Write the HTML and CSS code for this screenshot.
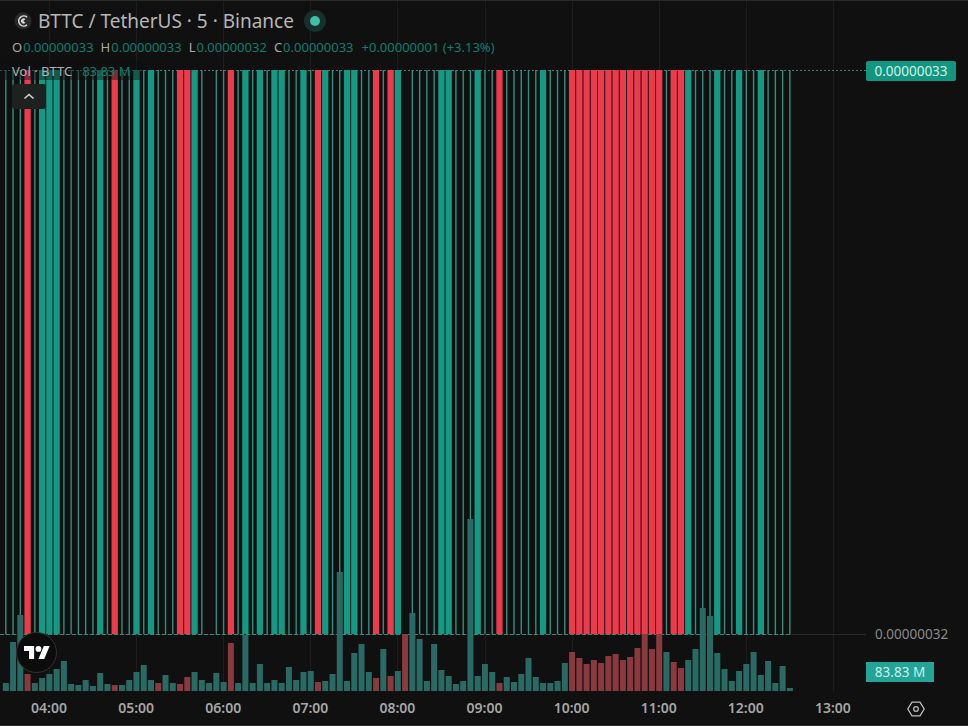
FILE: index.html
```html
<!DOCTYPE html>
<html lang="en">
<head>
<meta charset="utf-8">
<title>BTTC / TetherUS</title>
<link rel="stylesheet" href="styles.css">
</head>
<body>
<main class="chart">
  <section class="pane">
    <svg id="plot" class="plot" width="866" height="692" viewBox="0 0 866 692" aria-hidden="true"></svg>
    <div class="legend">
      <div class="title-row">
        <svg class="coin" width="18" height="18" viewBox="0 0 18 18" aria-hidden="true">
          <circle cx="9" cy="9" r="8.5" class="coin-bg"/>
          <path d="M13 5.2A5 5 0 1 0 13 12.8" class="coin-ring"/>
          <path d="M11.4 7.2A2.6 2.6 0 1 0 11.4 10.8L9.2 9Z" class="coin-core"/>
        </svg>
        <span class="title">BTTC / TetherUS · 5 · Binance</span>
        <span class="status"><span class="status-dot"></span></span>
      </div>
      <div class="ohlc-row">
        <span class="pair"><b>O</b><i>0.00000033</i></span>
        <span class="pair"><b>H</b><i>0.00000033</i></span>
        <span class="pair"><b>L</b><i>0.00000032</i></span>
        <span class="pair"><b>C</b><i>0.00000033</i></span>
        <span class="change">+0.00000001 (+3.13%)</span>
      </div>
      <div class="vol-row"><span class="vol-name">Vol · BTTC</span><span class="vol-value">83.83 M</span></div>
      <button class="collapse" type="button" aria-label="Collapse">
        <svg width="12" height="7" viewBox="0 0 12 7" aria-hidden="true"><path d="M1.5 5.5 6 1.5l4.500 4" class="chevron"/></svg>
      </button>
    </div>
    <div class="tv-logo">
      <svg width="26" height="13" viewBox="0 4 36 18" aria-hidden="true">
        <path d="M14 22H7V11H0V4h14v18zM28 22h-8l7.500-18h8L28 22z" class="logo-fill"/>
        <circle cx="20" cy="8" r="4" class="logo-fill"/>
      </svg>
    </div>
  </section>
  <aside class="price-axis">
    <span class="tag tag-price">0.00000033</span>
    <span class="axis-price">0.00000032</span>
    <span class="tag tag-vol">83.83 M</span>
  </aside>
  <footer class="time-axis">
    <span>04:00</span><span>05:00</span><span>06:00</span><span>07:00</span><span>08:00</span><span>09:00</span><span>10:00</span><span>11:00</span><span>12:00</span><span>13:00</span>
  </footer>
  <div class="corner">
    <svg width="20" height="20" viewBox="0 0 20 20" aria-hidden="true">
      <path d="M6 3.200h8L18.200 10 14 16.800H6L1.800 10Z" class="gear"/>
      <circle cx="10" cy="10" r="2.300" class="gear"/>
    </svg>
  </div>
</main>
<script src="app.js"></script>
</body>
</html>
```

FILE: styles.css
```css
* { box-sizing: border-box; }
html, body { margin: 0; height: 100%; background: #101010; overflow: hidden; }
body { font-family: "Noto Sans", "Open Sans", sans-serif; }

.chart {
  display: grid;
  grid-template-columns: 866px 102px;
  grid-template-rows: 692px 34px;
  width: 968px;
  height: 726px;
  background: #101010;
  border-top: 1px solid #2a2a2a;
  border-bottom: 1px solid #2a2a2a;
}

.pane { position: relative; margin-top: -1px; height: 693px; }
.plot { display: block; }

.grid-line { stroke: #1e1e1e; stroke-width: 1; }
.base-line { stroke: #2a2a2a; stroke-width: 1; }
.dash-top { stroke: #3f8375; stroke-width: 1; stroke-dasharray: 2 2; }
.dash-bottom { stroke: #3f8375; stroke-width: 1; stroke-dasharray: 4 2; }
.halo { fill: #0a1413; }
.thick { fill: #149a84; }
.thin { fill: #41877a; }
.red { fill: #ec3b4d; }
.vol-up { fill: #2a6a65; }
.vol-down { fill: #8a3a3f; }

.legend { position: absolute; left: 0; top: 0; width: 600px; color: #b5b5b5; }

.title-row { display: flex; align-items: center; height: 26px; margin-top: 8px; padding-left: 14px; }
.coin { flex: none; }
.coin-bg { fill: #2a2a2a; }
.coin-ring { fill: none; stroke: #d8d8d8; stroke-width: 1.600; }
.coin-core { fill: #d8d8d8; }
.title { margin-left: 6px; font-size: 19px; line-height: 26px; color: #b6b6b6; white-space: nowrap; }
.status { display: flex; align-items: center; justify-content: center; width: 22px; height: 22px; margin-left: 10px; border-radius: 50%; background: #17302c; }
.status-dot { width: 10px; height: 10px; border-radius: 50%; background: #3fbfa6; }

.ohlc-row { display: flex; align-items: center; height: 20px; margin-top: 3px; padding-left: 12px; font-size: 13px; white-space: nowrap; }
.pair { display: flex; margin-right: 7px; }
.pair b { font-weight: 400; color: #a8a8a8; margin-right: 1px; }
.pair i { font-style: normal; color: #0f7d6e; }
.change { margin-left: 1px; color: #0f7d6e; }

.vol-row { display: flex; align-items: center; width: 143px; height: 18px; margin-top: 5px; padding-left: 12px; background: rgba(16, 16, 16, 0.45); font-size: 13px; white-space: nowrap; }
.vol-name { color: #b0b0b0; margin-right: 10px; }
.vol-value { color: #0f7d6e; }

.collapse { display: flex; align-items: center; justify-content: center; width: 34px; height: 25px; margin: 4px 0 0 12px; padding: 0; border: 0; border-radius: 3px; background: #1d2120; }
.chevron { fill: none; stroke: #d4d4d4; stroke-width: 1.600; }

.tv-logo { position: absolute; left: 16px; top: 632px; display: flex; align-items: center; justify-content: center; width: 41px; height: 41px; border-radius: 50%; background: #0c0c0c; border: 1px solid #333; }
.logo-fill { fill: #fff; }

.price-axis { display: flex; flex-direction: column; align-items: flex-start; padding-top: 60px; }
.tag { display: flex; align-items: center; justify-content: center; height: 20px; font-size: 13.500px; }
.tag-price { width: 90px; background: #13967f; color: #d4f0ea; border-radius: 2px; }
.axis-price { margin-top: 543px; margin-left: 9px; height: 20px; font-size: 13.500px; line-height: 20px; color: #8a8a8a; }
.tag-vol { width: 68px; height: 20px; margin-top: 18px; background: #22a498; color: #cdeee9; }

.time-axis { display: flex; padding-left: 5.500px; font-size: 14px; font-weight: 600; color: #a6a6a6; line-height: 30px; }
.time-axis span { flex: none; width: 87.100px; text-align: center; }

.corner { display: flex; align-items: center; justify-content: center; width: 102px; height: 32px; padding-right: 0; padding-left: 0; }
.corner svg { margin-left: -2px; }
.gear { fill: none; stroke: #bdbdbd; stroke-width: 1.300; }
```

FILE: app.js
```js
var NS = "http://www.w3.org/2000/svg";
var plot = document.getElementById("plot");
var START = 5.8, STEP = 7.26, TOP = 70, BASE = 634, FLOOR = 691;

var candles =
  "tttrtTTTtttttTtrttTtTtttrrTt_ttrt" +
  "TtTtTTttTtrTttTTttrtrT_ttttTTtttT" +
  "ttrtttttTttt" + "rrrrrrrrrrrrr" +
  "trrTtttTttTttTtttt";

var volumes = [
  8,49,76,17,8,13,17,22,30,7,6,11,5,18,7,6,6,11,19,26,11,8,16,8,7,14,19,11,8,18,9,48,8,
  56,8,27,8,11,8,24,11,19,20,9,10,17,119,10,38,47,19,13,42,15,20,57,78,52,10,47,21,15,7,10,172,15,
  27,19,8,14,9,17,33,14,8,8,10,28,
  39,33,27,31,28,35,37,31,34,43,57,42,57,
  39,29,23,31,42,83,75,38,22,10,20,27,39,16,30,8,25,3
];
var extraRedVolumes = { 21: true, 55: true };

function el(name, attrs) {
  var node = document.createElementNS(NS, name);
  for (var k in attrs) node.setAttribute(k, attrs[k]);
  plot.appendChild(node);
  return node;
}
function line(x1, y1, x2, y2, cls) {
  el("line", { x1: x1, y1: y1, x2: x2, y2: y2, "class": cls });
}
function bar(cx, w, top, bottom, cls) {
  el("rect", { x: cx - w / 2, y: top, width: w, height: bottom - top, "class": cls });
}

for (var g = 0; g < 10; g++) {
  var gx = Math.round(49 + 87.1 * g) + 0.5;
  line(gx, 1, gx, 692, "grid-line");
}
line(0, BASE + 0.5, 866, BASE + 0.5, "base-line");

var i, cx;
for (i = 0; i < candles.length; i++) {
  cx = START + STEP * i;
  if (candles[i] === "t") bar(cx, 4.4, TOP, BASE, "halo");
}
line(0, TOP + 0.5, 866, TOP + 0.5, "dash-top");
line(0, BASE + 0.5, 790, BASE + 0.5, "dash-bottom");

for (i = 0; i < candles.length; i++) {
  cx = START + STEP * i;
  var c = candles[i];
  if (c === "t") bar(cx, 1.4, TOP, BASE, "thin");
  if (c === "T") bar(cx, 6.3, TOP, BASE, "thick");
  if (c === "r") bar(cx, 6.3, TOP, BASE, "red");
}
for (i = 0; i < volumes.length; i++) {
  cx = START + STEP * i;
  var isRed = candles[i] === "r" || extraRedVolumes[i];
  bar(cx, 6, FLOOR - volumes[i], FLOOR, isRed ? "vol-down" : "vol-up");
}
```
